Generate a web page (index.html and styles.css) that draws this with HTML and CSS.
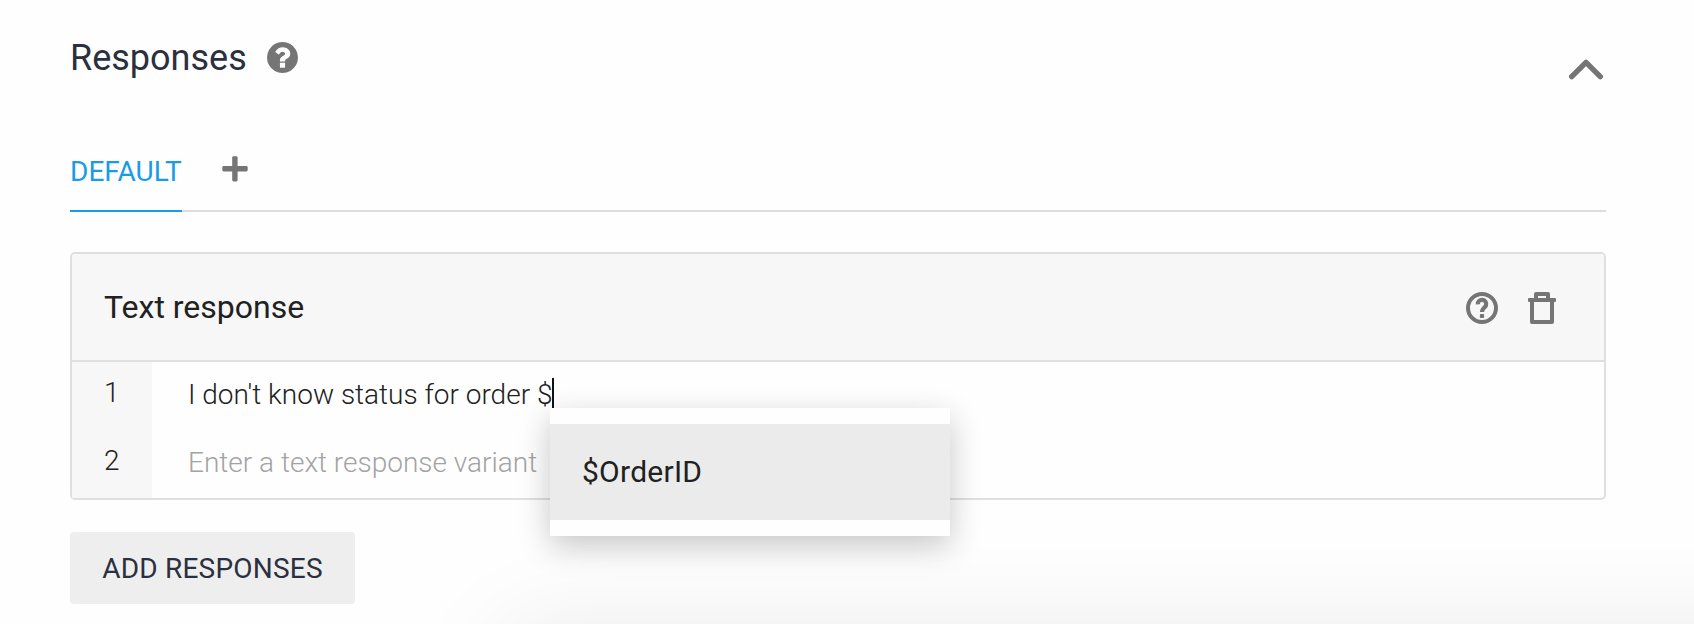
FILE: index.html
```html
<!DOCTYPE html>
<html lang="en">
<head>
<meta charset="utf-8">
<title>Responses</title>
<link rel="stylesheet" href="styles.css">
</head>
<body>
<main class="page">
  <header class="section-head">
    <h1 class="section-title">Responses</h1>
    <svg class="icon-help" viewBox="128 128 1536 1536"><path fill="currentColor" d="M1024 1376v-192q0-14-9-23t-23-9h-192q-14 0-23 9t-9 23v192q0 14 9 23t23 9h192q14 0 23-9t9-23zm256-672q0-88-55.5-163t-138.5-116-170-41q-243 0-371 213-15 24 8 42l132 100q7 6 19 6 16 0 25-12 53-68 86-92 34-24 86-24 48 0 85.5 26t37.5 59q0 38-20 61t-68 45q-63 28-115.5 86.5t-52.5 125.5v36q0 14 9 23t23 9h192q14 0 23-9t9-23q0-19 21.5-49.5t54.5-49.5q32-18 49-28.5t46-35 44.5-48 28-60.5 12.5-81zm384 192q0 209-103 385.5t-279.5 279.5-385.5 103-385.5-103-279.5-279.5-103-385.5 103-385.5 279.5-279.5 385.5-103 385.5 103 279.5 279.5 103 385.5z"/></svg>
    <svg class="icon-chevron" viewBox="0 0 36 22"><path d="M3.7 18.6 18 4.3l14.3 14.3" fill="none" stroke="currentColor" stroke-width="5.4" stroke-linecap="round" stroke-linejoin="round"/></svg>
  </header>

  <nav class="tabs">
    <a class="tab tab-active">DEFAULT</a>
    <svg class="icon-plus" viewBox="0 0 26 26"><rect x="10.2" y="0.2" width="5.4" height="25.2" rx="1.4" fill="currentColor"/><rect x="0.3" y="10" width="25.4" height="5.4" rx="1.4" fill="currentColor"/></svg>
  </nav>

  <section class="card">
    <div class="card-head">
      <h2 class="card-title">Text response</h2>
      <svg class="icon-help-outline" viewBox="0 0 32 32" fill="none" stroke="currentColor"><circle cx="16" cy="16" r="14" stroke-width="4"/><path d="M11.8 12.3a4.2 4.2 0 1 1 8.2.9c-.5 2.3-4 2.9-4 6.8" stroke-width="4.2"/><rect x="13.9" y="22" width="4.2" height="4" rx=".8" fill="currentColor" stroke="none"/></svg>
      <svg class="icon-trash" viewBox="0 0 28 32"><path fill="currentColor" fill-rule="evenodd" d="M8 0h12q2 0 2 2v4h5q1 0 1 1v2q0 1-1 1h-1v20q0 2-2 2H4q-2 0-2-2V10H1q-1 0-1-1V7q0-1 1-1h5V2q0-2 2-2zm2 4v2h8V4zM6 10v18h16V10z"/></svg>
    </div>
    <ol class="rows">
      <li class="row">
        <span class="row-num">1</span>
        <div class="row-text">I don't know status for order $<span class="caret"></span>
          <div class="menu"><div class="menu-item">$OrderID</div></div>
        </div>
      </li>
      <li class="row">
        <span class="row-num">2</span>
        <div class="row-text placeholder">Enter a text response variant</div>
      </li>
    </ol>
  </section>

  <button class="add-button">ADD RESPONSES</button>
  <div class="bottom-shadow"></div>
</main>
</body>
</html>
```
FILE: styles.css
```css
* { box-sizing: border-box; }

body {
  margin: 0;
  background: #fefefe;
  color: #212121;
  font-family: Roboto, "Liberation Sans", sans-serif;
}

svg { display: block; flex: none; color: #757575; }

.page {
  position: relative;
  height: 624px;
  padding: 36px 88px 0 70px;
  overflow: hidden;
}

.section-head {
  display: flex;
  align-items: flex-start;
  height: 96px;
}

.section-title {
  margin: 1px 0 0;
  font-size: 36px;
  font-weight: 400;
  line-height: 42px;
  color: #2b303f;
}

.icon-help { width: 31px; height: 31px; margin: 5.5px 0 0 20px; }
.icon-chevron { width: 36px; height: 22px; margin: 21.5px 2px 0 auto; }

.tabs {
  display: flex;
  height: 80px;
  border-bottom: 2px solid #dcdcdc;
}

.tab {
  height: 80px;
  padding-top: 23px;
  font-size: 28px;
  line-height: 34px;
  color: #1a9be6;
}

.tab-active { border-bottom: 2px solid #1a9be6; }
.icon-plus { width: 26px; height: 26px; margin: 24px 0 0 40px; }

.card {
  margin-top: 40px;
  border: 2px solid #dfdfdf;
  border-radius: 5px;
}

.card-head {
  display: flex;
  align-items: center;
  height: 108px;
  padding: 2px 48px 0 32px;
  background: #f7f7f7;
  border-bottom: 2px solid #dfdfdf;
  border-radius: 3px 3px 0 0;
}

.card-title {
  flex: 1;
  margin: 0 0 2px;
  font-size: 32px;
  font-weight: 400;
  line-height: 38px;
}

.icon-help-outline { width: 32px; height: 32px; margin-right: 30px; }
.icon-trash { width: 28px; height: 32px; }

.rows { margin: 0; padding: 0; list-style: none; }

.row {
  display: flex;
  height: 68px;
  font-size: 28px;
  font-weight: 300;
  line-height: 34px;
}

.row-num {
  width: 80px;
  padding: 14px 0 0 32px;
  background: #f7f7f7;
}

.row-text { position: relative; padding: 16px 0 0 36px; white-space: nowrap; }
.placeholder { color: #a3a3a3; }

.caret {
  display: inline-block;
  width: 2px;
  height: 30px;
  background: #111;
  vertical-align: -4px;
}

.menu {
  position: absolute;
  z-index: 2;
  top: 46px;
  left: 398px;
  width: 400px;
  padding: 16px 0;
  background: #fefefe;
  box-shadow: 0 10px 30px rgba(0, 0, 0, .22);
}

.menu-item {
  height: 96px;
  padding: 30px 32px;
  background: #ebebeb;
  font-size: 30px;
  font-weight: 400;
  letter-spacing: .25px;
  line-height: 36px;
}

.add-button {
  display: block;
  width: 285px;
  height: 72px;
  margin-top: 32px;
  padding: 2px 0 0;
  border: 0;
  border-radius: 4px;
  background: #eee;
  color: #2b303f;
  font: 400 28px/34px Roboto, "Liberation Sans", sans-serif;
  letter-spacing: .2px;
}

.bottom-shadow {
  position: absolute;
  top: 640px;
  left: 510px;
  width: 1400px;
  height: 400px;
  box-shadow: 0 0 100px rgba(0, 0, 0, .1);
}
```
